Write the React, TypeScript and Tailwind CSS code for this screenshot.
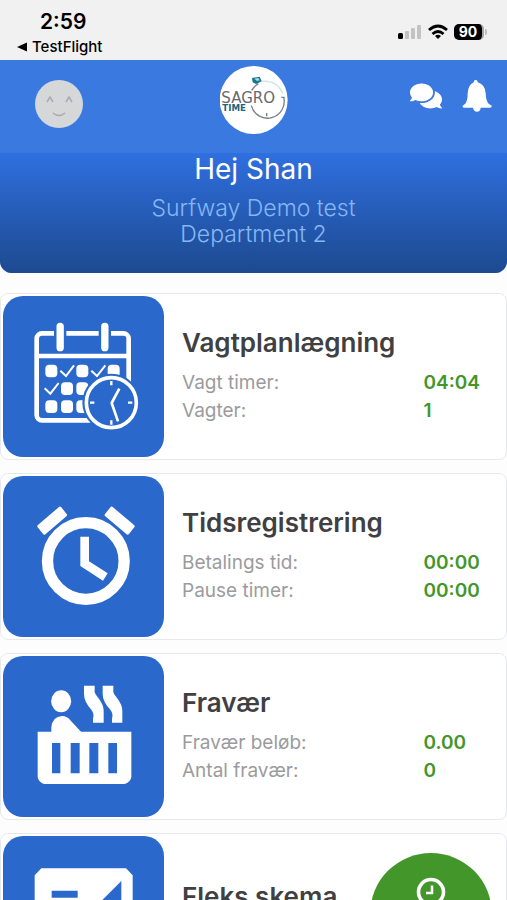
import type { ReactNode } from "react";
import { FaComments } from "react-icons/fa";

type Stat = { label: string; value: string };
type Module = { title: string; icon: ReactNode; stats: Stat[] };

function CalendarIcon() {
  return (
    <svg viewBox="11 33 483 483" className="size-full" fill="none" aria-hidden="true">
      <rect x="112" y="145" width="276" height="261" rx="16" stroke="#fff" strokeWidth="14" />
      <path d="M112 213H388" stroke="#fff" strokeWidth="14" />
      <path d="M164 130h37v50h-37zM298 130h37v50h-37z" fill="#2b68cb" />
      <path d="M182.500 124v64M316.500 124v64" stroke="#fff" strokeWidth="22" strokeLinecap="round" />
      <g fill="#fff">
        <rect x="138" y="239" width="36" height="38" rx="12" />
        <rect x="231" y="239" width="36" height="38" rx="12" />
        <rect x="325" y="239" width="36" height="38" rx="12" />
        <rect x="185" y="292" width="36" height="38" rx="12" />
        <rect x="231" y="292" width="36" height="38" rx="12" />
        <rect x="138" y="346" width="36" height="38" rx="12" />
        <rect x="185" y="346" width="36" height="38" rx="12" />
        <rect x="231" y="346" width="36" height="38" rx="12" />
      </g>
      <path
        d="M183 257l17 16 24-32M276 257l17 16 25-32M136 310l17 16 25-32"
        stroke="#fff"
        strokeWidth="6"
      />
      <circle cx="336" cy="353" r="87" fill="#2b68cb" />
      <circle cx="336" cy="353" r="75" stroke="#fff" strokeWidth="11" />
      <path d="M336 288v13M336 406v13M272 353h13M386 353h13" stroke="#fff" strokeWidth="7" />
      <path d="M360 311L337 354L356 409" stroke="#fff" strokeWidth="8" strokeLinejoin="round" />
    </svg>
  );
}

function AlarmIcon() {
  return (
    <svg viewBox="11 31 483 483" className="size-full" fill="#fff" aria-hidden="true">
      <circle cx="259.500" cy="286" r="115" fill="none" stroke="#fff" strokeWidth="34" />
      <path d="M256 213V294L318 334" fill="none" stroke="#fff" strokeWidth="26" />
      <path
        d="M182 128L198 148L135 202L119 182ZM337 128L321 148L385 202L401 182Z"
        stroke="#fff"
        strokeWidth="10"
        strokeLinejoin="round"
      />
    </svg>
  );
}

function BathIcon() {
  return (
    <svg viewBox="11 31 483 483" className="size-full" fill="#fff" aria-hidden="true">
      <ellipse cx="185.500" cy="167" rx="30" ry="33" />
      <path d="M156 262V245Q159 213 188 211Q204 211 215 226L245 258V262Z" />
      <path
        fillRule="evenodd"
        d="M115 258H396V395Q392 411 376 415H134Q119 411 115 395ZM158 292V383H183V292ZM214 292V383H241V292ZM270 292V383H297V292ZM327 292V383H353V292Z"
      />
      <path d="M254 120H286V134Q283 141 297 157Q313 177 313 196V231H281V219Q286 205 276 192Q254 168 254 145Z" />
      <path d="M310 120H342V134Q339 141 353 157Q369 177 369 196V231H338V219Q343 205 333 192Q310 168 310 145Z" />
    </svg>
  );
}

function FlexIcon() {
  return (
    <svg viewBox="11 58 483 483" className="size-full" aria-hidden="true">
      <path
        fill="#fff"
        fillRule="evenodd"
        d="M126 155H380L400 176V426L380 447H126L106 426V176ZM157 222V243H235V222ZM366 193L160 399V407H366Z"
      />
    </svg>
  );
}

function SagroLogo() {
  return (
    <svg viewBox="62 30 204 204" className="size-17" role="img" aria-label="Sagro Time">
      <circle cx="163" cy="132" r="102" fill="#fff" />
      <g fill="none" stroke="#7b7e82" strokeWidth="4">
        <path d="M157 103Q165 90 177 83" />
        <path d="M253 124A50 50 0 0 1 156 149" />
        <path d="M202 171v10M246 124h10" />
        <path d="M187 76Q230 70 251 112" stroke="#cfe2e6" />
      </g>
      <path d="M158 66L181 62L187 76L170 84L160 79Z" fill="#16768c" />
      <path d="M165 68l12-2 4 7-8 2z" fill="#a9dce6" />
      <text x="66" y="140" fontFamily="'DejaVu Sans', sans-serif" fontSize="45" fill="#66696d">
        SAGRO
      </text>
      <text x="69" y="166" fontFamily="'DejaVu Sans', sans-serif" fontSize="26" fontWeight="700" fill="#1c6480">
        TIME
      </text>
    </svg>
  );
}

const modules: Module[] = [
  {
    title: "Vagtplanlægning",
    icon: <CalendarIcon />,
    stats: [
      { label: "Vagt timer:", value: "04:04" },
      { label: "Vagter:", value: "1" },
    ],
  },
  {
    title: "Tidsregistrering",
    icon: <AlarmIcon />,
    stats: [
      { label: "Betalings tid:", value: "00:00" },
      { label: "Pause timer:", value: "00:00" },
    ],
  },
  {
    title: "Fravær",
    icon: <BathIcon />,
    stats: [
      { label: "Fravær beløb:", value: "0.00" },
      { label: "Antal fravær:", value: "0" },
    ],
  },
  {
    title: "Fleks skema",
    icon: <FlexIcon />,
    stats: [{ label: "Saldo:", value: "00:00" }],
  },
];

function StatusBar() {
  return (
    <div className="flex h-15 shrink-0 items-start justify-between bg-[#f1f1f1] pr-5 pl-4 text-black">
      <div className="flex flex-col pt-2">
        <span className="pl-6 text-[21px] leading-7 font-semibold">2:59</span>
        <a href="#testflight" className="flex items-center gap-1 text-[15px] leading-[22px] font-medium">
          <svg viewBox="0 0 12 12" className="size-3" aria-hidden="true">
            <path d="M1 6L11 1.500V10.500Z" />
          </svg>
          TestFlight
        </a>
      </div>
      <div className="flex items-center gap-1.5 pt-6">
        <svg viewBox="0 0 24 16" className="h-4 w-6" aria-hidden="true">
          <rect x="0" y="9" width="5" height="6" rx="1.500" />
          <g fill="#c3c3c3">
            <rect x="7" y="7" width="4" height="8" rx="1" />
            <rect x="13" y="4" width="4" height="11" rx="1" />
            <rect x="19" y="1" width="4" height="14" rx="1" />
          </g>
        </svg>
        <svg viewBox="0 0 20 16" className="h-4 w-5" fill="none" stroke="#000" strokeWidth="2.800" aria-hidden="true">
          <path d="M1 6Q10-2 19 6M4.500 10Q10 5 15.500 10" />
          <path d="M7 12Q10 9.500 13 12L10 15Z" fill="#000" stroke="none" />
        </svg>
        <div className="flex items-center gap-px">
          <span className="flex h-4 w-[30px] items-center justify-center rounded-[5px] border-r-2 border-[#a5a5a5] bg-black text-sm leading-4 font-bold text-white">
            90
          </span>
          <span className="h-1.5 w-0.5 rounded-r bg-[#bdbdbd]" />
        </div>
      </div>
    </div>
  );
}

function Header() {
  return (
    <header className="flex h-[213px] shrink-0 flex-col overflow-hidden rounded-b-xl bg-[#3a7ae0] text-center">
      <div className="grid h-[93px] shrink-0 grid-cols-3 items-start px-[15px] pt-1.5">
        <button type="button" aria-label="Profil" className="mt-3.5 ml-5 size-12 justify-self-start">
          <svg viewBox="0 0 48 48" className="size-full" aria-hidden="true">
            <circle cx="24" cy="24" r="24" fill="#d6d7d9" />
            <path
              d="M12 22l3-5 3 5M31 22l3-5 3 5M18 33q6 5 12 0"
              fill="none"
              stroke="#a9abae"
              strokeWidth="1.500"
            />
          </svg>
        </button>
        <div className="flex justify-center">
          <SagroLogo />
        </div>
        <div className="mt-3.5 flex items-center gap-5 justify-self-end text-white">
          <button type="button" aria-label="Beskeder">
            <FaComments className="size-8" />
          </button>
          <button type="button" aria-label="Notifikationer">
            <svg viewBox="247 241 88 96" className="h-8 w-[30px]" fill="currentColor" aria-hidden="true">
              <path d="M281 248Q281 241 287 241Q293 241 293 248Q315 254 317 281Q318 305 326 312L335 318Q336 324 326 324H302Q301 336 291 336Q281 336 279 324H255Q246 324 248 318L256 312Q263 303 263 281Q264 256 281 248Z" />
            </svg>
          </button>
        </div>
      </div>
      <div className="flex-1 bg-linear-to-b from-[#2f6fe0] to-[#1d4a90]">
        <h1 className="text-[28px] leading-8 text-white">Hej Shan</h1>
        <p className="mx-auto mt-2.5 w-60 text-[23px] leading-[26px] font-light text-[#86b7f5]">
          Surfway Demo test Department 2
        </p>
      </div>
    </header>
  );
}

function ModuleCard({ title, icon, stats }: Module) {
  return (
    <article className="flex shrink-0 rounded-lg border border-[#e6eaee] bg-white p-0.5">
      <div className="size-[161px] shrink-0 rounded-[20px] bg-[#2b68cb]">{icon}</div>
      <div className="flex min-w-0 flex-1 flex-col justify-center pb-1 pl-[18px]">
        <h2 className="text-[26px] leading-9 font-semibold text-[#404042]">{title}</h2>
        <dl className="mt-2 text-[19px] leading-7">
          {stats.map((stat) => (
            <div key={stat.label} className="grid grid-cols-[3fr_1fr]">
              <dt className="text-[#9b9b9d]">{stat.label}</dt>
              <dd className="font-semibold text-[#43962a]">{stat.value}</dd>
            </div>
          ))}
        </dl>
      </div>
    </article>
  );
}

export default function App() {
  return (
    <div className="flex h-screen flex-col overflow-hidden bg-[#fdfdfd] font-['Inter',sans-serif]">
      <StatusBar />
      <Header />
      <main className="flex min-h-0 flex-1 flex-col gap-[13px] overflow-y-auto pt-5 [scrollbar-width:none]">
        {modules.map((module) => (
          <ModuleCard key={module.title} {...module} />
        ))}
      </main>
      <button
        type="button"
        aria-label="Stempelur"
        className="fixed right-[15px] -bottom-[75px] flex size-[122px] justify-center rounded-full bg-[#43962a] pt-6"
      >
        <svg viewBox="0 0 30 30" className="size-[30px]" fill="none" stroke="#fff" aria-hidden="true">
          <circle cx="15" cy="15" r="12.500" strokeWidth="3.600" />
          <path d="M16 8.500V16H10" strokeWidth="2.500" />
        </svg>
      </button>
    </div>
  );
}
